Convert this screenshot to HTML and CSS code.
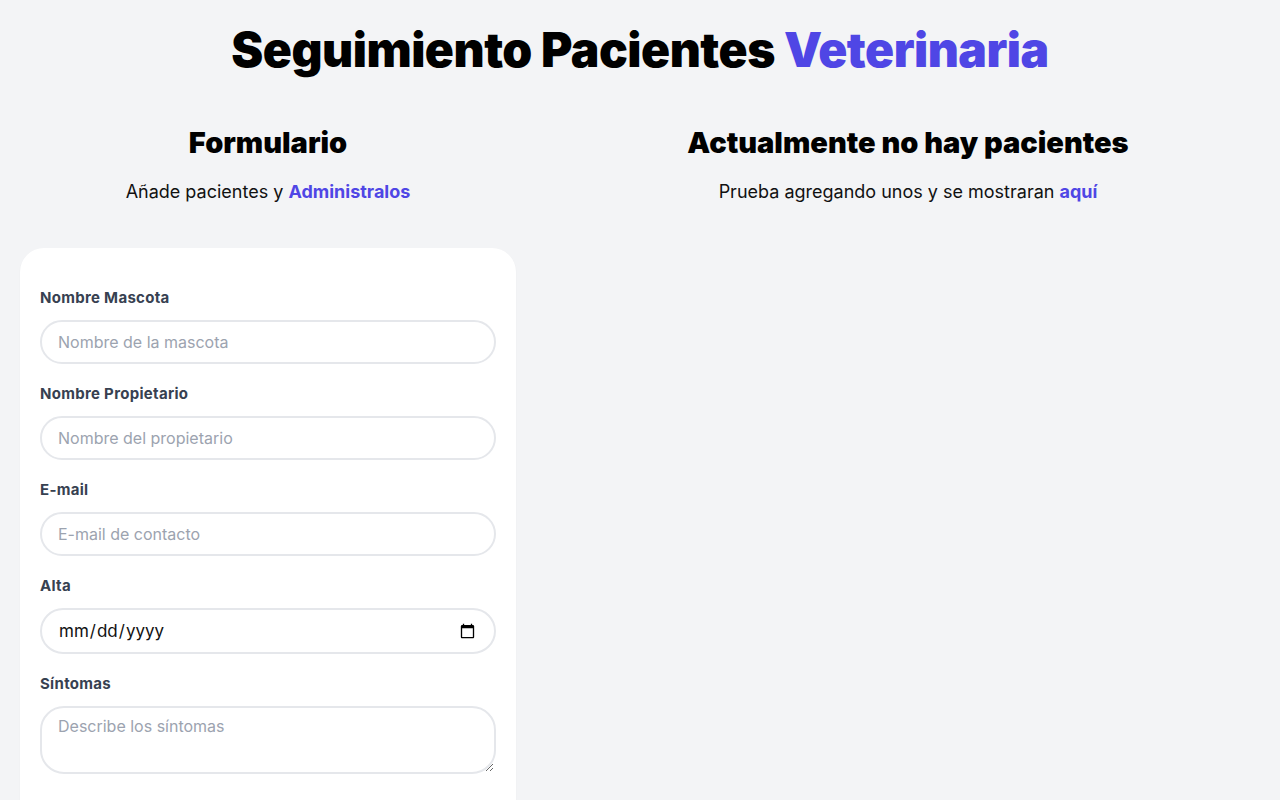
FILE: index.html
```html
<!DOCTYPE html>
<html lang="es">
<head>
<meta charset="utf-8">
<title>Veterinaria</title>
<link rel="stylesheet" href="styles.css">
</head>
<body>
<div class="container">
  <h1 class="title">Seguimiento Pacientes <span class="accent">Veterinaria</span></h1>
  <div class="columns">
    <section class="form-col">
      <h2 class="heading">Formulario</h2>
      <p class="subtitle">Añade pacientes y <span class="accent strong">Administralos</span></p>
      <form class="card">
        <div class="field">
          <label class="label" for="mascota">Nombre Mascota</label>
          <input class="input" id="mascota" type="text" placeholder="Nombre de la mascota">
        </div>
        <div class="field">
          <label class="label" for="propietario">Nombre Propietario</label>
          <input class="input" id="propietario" type="text" placeholder="Nombre del propietario">
        </div>
        <div class="field">
          <label class="label" for="email">E-mail</label>
          <input class="input" id="email" type="email" placeholder="E-mail de contacto">
        </div>
        <div class="field">
          <label class="label" for="alta">Alta</label>
          <input class="input date" id="alta" type="date">
        </div>
        <div class="field">
          <label class="label" for="sintomas">Síntomas</label>
          <textarea class="input textarea" id="sintomas" placeholder="Describe los síntomas"></textarea>
        </div>
      </form>
    </section>
    <section class="list-col">
      <h2 class="heading">Actualmente no hay pacientes</h2>
      <p class="subtitle">Prueba agregando unos y se mostraran <span class="accent strong">aquí</span></p>
    </section>
  </div>
</div>
</body>
</html>
```
FILE: styles.css
```css
* { box-sizing: border-box; }
html, body { margin: 0; padding: 0; }
body {
  background: #f3f4f6;
  font-family: Inter, "Noto Sans", sans-serif;
  color: #111;
}
.container { padding: 24px 20px 0; }
.title {
  margin: 0;
  text-align: center;
  font-size: 48px;
  line-height: 52px;
  font-weight: 900;
  letter-spacing: -0.5px;
  color: #000;
}
.accent { color: #4f46e5; }
.strong { font-weight: 700; }
.columns { display: flex; margin-top: 49px; }
.form-col { width: 496px; flex: none; }
.list-col { flex: 1; padding-left: 40px; }
.heading {
  margin: 0;
  text-align: center;
  font-size: 29px;
  line-height: 36px;
  font-weight: 900;
  color: #000;
}
.subtitle {
  margin: 17px 0 0;
  text-align: center;
  font-size: 18px;
  line-height: 28px;
  color: #111;
}
.card {
  margin-top: 42px;
  background: #fff;
  border-radius: 24px;
  padding: 40px 20px 40px;
  box-shadow: 0 1px 2px rgba(0,0,0,0.04);
}
.field { margin-bottom: 20px; }
.label {
  display: block;
  font-size: 15px;
  line-height: 20px;
  font-weight: 700;
  letter-spacing: 0.3px;
  color: #374151;
}
.input {
  display: block;
  width: 100%;
  margin-top: 12px;
  height: 44px;
  border: 2px solid #e5e7eb;
  border-radius: 9999px;
  padding: 0 16px;
  font-family: inherit;
  font-size: 16px;
  color: #111;
  background: #fff;
  outline: none;
}
.input::placeholder { color: #9ca3af; }
.date { height: 46px; font-size: 17px; }
.textarea {
  height: 68px;
  border-radius: 24px;
  padding: 8px 16px;
  resize: vertical;
}
```
